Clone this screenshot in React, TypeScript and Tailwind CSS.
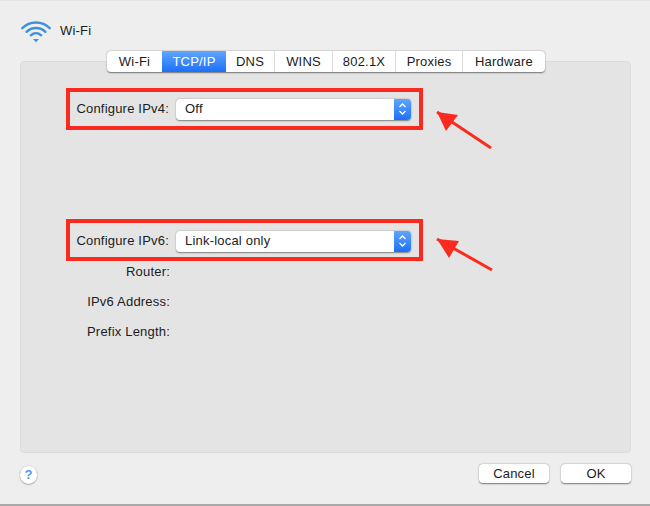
const tabs = [
  { label: "Wi-Fi", w: "w-[55px]" },
  { label: "TCP/IP", w: "w-[64px]", active: true },
  { label: "DNS", w: "w-[49px]" },
  { label: "WINS", w: "w-[58px]" },
  { label: "802.1X", w: "w-[63px]" },
  { label: "Proxies", w: "w-[67px]" },
  { label: "Hardware", w: "w-[82px]" },
];

function Stepper() {
  return (
    <span className="flex h-full w-[17px] items-center justify-center rounded-r-[4px] bg-gradient-to-b from-[#5fa5fb] to-[#1a6ffb]">
      <svg width="9" height="14" viewBox="0 0 9 14" fill="none" stroke="#fff" strokeWidth="1.3">
        <path d="M1.5 5 4.5 2l3 3M1.5 9l3 3 3-3" />
      </svg>
    </span>
  );
}

function ConfigRow({ label, value, low }: { label: string; value: string; low?: boolean }) {
  return (
    <div className={`ml-[45px] flex h-[42px] w-[357px] items-center border-[4px] border-[#fb2a1f] pl-[6px] ${low ? "pt-[2px]" : ""}`}>
      <span className="w-[93px] text-right text-[#1c1c1c] whitespace-nowrap">{label}</span>
      <div className="ml-[7px] flex h-[21px] w-[235px] items-center justify-between rounded-[4px] bg-white pl-[9px] shadow-[0_0.5px_1.5px_rgba(0,0,0,0.45)]">
        <span className="text-[#1c1c1c]">{value}</span>
        <Stepper />
      </div>
    </div>
  );
}

function InfoRow({ label }: { label: string }) {
  return <div className="h-[30px] w-[149px] text-right leading-[30px] text-[#1c1c1c]">{label}</div>;
}

function Arrow({ className, tip, a, b, tail }: { className: string; tip: string; a: string; b: string; tail: string }) {
  return (
    <svg className={className} width="70" height="60" viewBox="0 0 70 60" fill="none">
      <path d={`M${tip} L${a} L${b} Z`} fill="#fb2a1f" />
      <path d={`M${tail} L${tip}`} stroke="#fb2a1f" strokeWidth="3" />
    </svg>
  );
}

export default function App() {
  return (
    <div className="relative flex h-[506px] w-[650px] flex-col overflow-hidden border-t border-b-2 border-t-[#e6e6e6] border-b-[#a9a9a9] bg-[#eeeeee] font-['Liberation_Sans',sans-serif] text-[13px] tracking-[0.2px]">
      <div className="flex h-[50px] shrink-0 items-start pl-[21px] pt-[19px]">
        <svg width="30" height="23" viewBox="0 0 30 23" fill="none" stroke="#3d90db" strokeWidth="2.4" strokeLinecap="round">
          <path d="M1.3 8.2C8.8 .6 21.2 .6 28.7 8.2" />
          <path d="M5.6 11.8C10.8 6.8 19.2 6.8 24.4 11.8" />
          <path d="M9.8 15.3C12.9 12.6 17.1 12.6 20.2 15.3" />
          <path d="M12 19h6l-3 3.2Z" fill="#3d90db" stroke="none" />
        </svg>
        <span className="ml-[9px] mt-[1px] text-[13px] text-[#1c1c1c]">Wi-Fi</span>
      </div>

      <div className="relative z-10 -mb-[11px] flex h-[21px] w-[438px] shrink-0 self-center translate-x-[1px] overflow-hidden rounded-[4px] bg-white shadow-[0_0.5px_1.5px_rgba(0,0,0,0.5)]">
        {tabs.map((t, i) => (
          <div
            key={t.label}
            className={`flex h-full items-center justify-center ${t.w} ${
              t.active
                ? "bg-gradient-to-b from-[#5fa5fb] to-[#1a6ffb] text-white"
                : `text-[#1c1c1c] ${i < tabs.length - 1 && !tabs[i + 1].active ? "border-r border-r-[#dcdcdc]" : ""}`
            }`}
          >
            {t.label}
          </div>
        ))}
      </div>

      <div className="mx-[20px] h-[392px] w-[611px] shrink-0 rounded-[4px] border border-[#dcdcdc] bg-[#e4e4e4] pt-[26px]">
        <ConfigRow label="Configure IPv4:" value="Off" />
        <div className="h-[89px]" />
        <ConfigRow label="Configure IPv6:" value="Link-local only" low />
        <div className="-mt-[4px]">
          <InfoRow label="Router:" />
          <InfoRow label="IPv6 Address:" />
          <InfoRow label="Prefix Length:" />
        </div>
      </div>

      <div className="mx-[20px] mt-[11px] flex w-[611px] items-start justify-between">
        <div className="mt-[2px] flex h-[18px] w-[17px] items-center justify-center rounded-full bg-white text-[13px] font-bold text-[#4a98f5] shadow-[0_0.5px_1.5px_rgba(0,0,0,0.5)]">
          ?
        </div>
        <div className="flex gap-[12px]">
          <div className="flex h-[19px] w-[70px] items-center justify-center rounded-[4px] bg-white text-[#1c1c1c] shadow-[0_0.5px_1.5px_rgba(0,0,0,0.5)]">
            Cancel
          </div>
          <div className="flex h-[19px] w-[70px] items-center justify-center rounded-[4px] bg-white text-[#1c1c1c] shadow-[0_0.5px_1.5px_rgba(0,0,0,0.5)]">
            OK
          </div>
        </div>
      </div>

      <Arrow className="absolute left-[430px] top-[104px]" tip="7 7" a="16 26" b="28 10" tail="61 43" />
      <Arrow className="absolute left-[430px] top-[231px]" tip="7 7" a="19 26" b="29 9" tail="62 38" />
    </div>
  );
}
